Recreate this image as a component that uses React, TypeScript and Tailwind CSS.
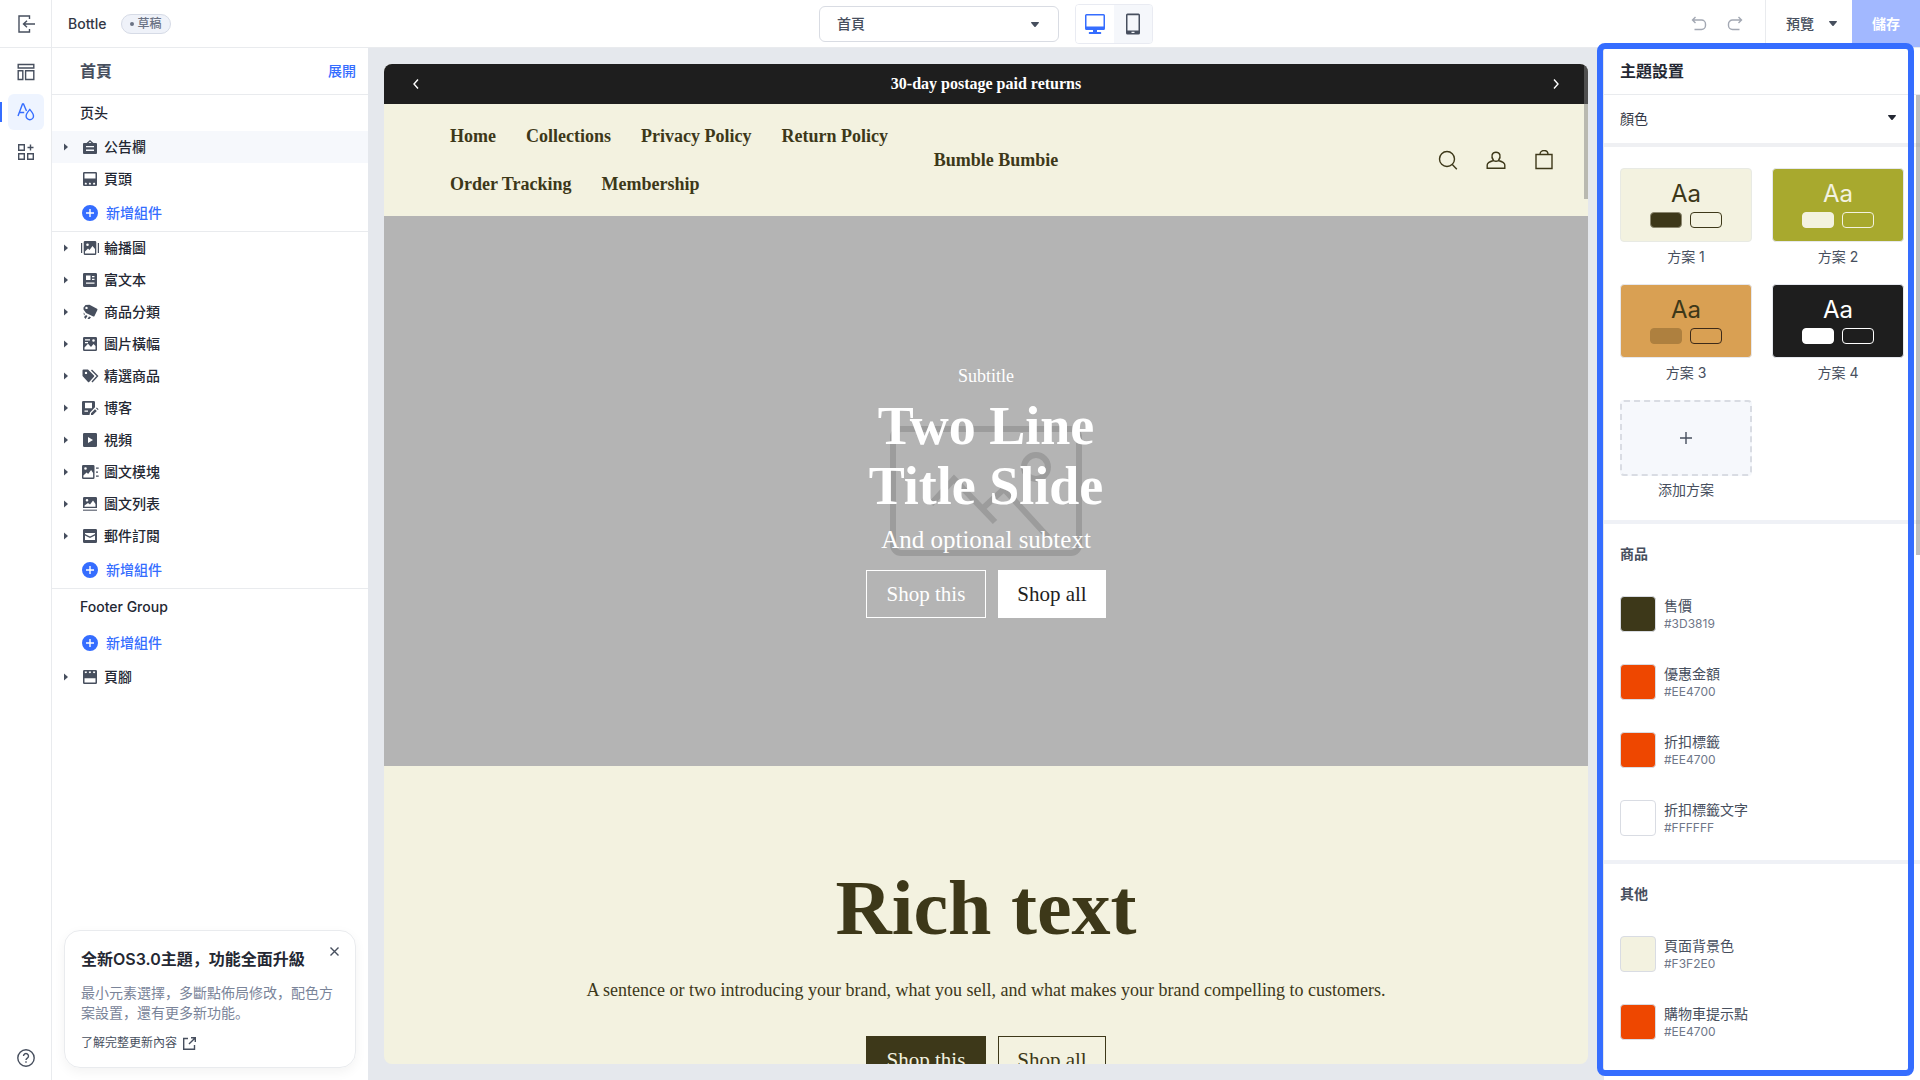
import { FC, ReactNode } from "react";

interface IIconProps {
  className?: string
  size?: number
  box?: number
  stroke?: boolean
  children: ReactNode
}

const Icon: FC<IIconProps> = ({ className = "", size = 20, box = 20, stroke = false, children }) => (
  <svg
    aria-hidden="true"
    className={`shrink-0 ${className}`}
    width={size}
    height={size}
    viewBox={`0 0 ${box} ${box}`}
    fill={stroke ? "none" : "currentColor"}
    stroke={stroke ? "currentColor" : "none"}
    strokeWidth="1.4"
  >
    {children}
  </svg>
);

// section icons, all on a 20x20 box
const sectionIcons: Record<string, ReactNode> = {
  announcement: (
    <>
      <path d="M7 6.500 10 3.800l3 2.700" fill="none" stroke="currentColor" strokeWidth="1.3" />
      <path fillRule="evenodd" d="M4 6h12a1 1 0 0 1 1 1v9a1 1 0 0 1-1 1H4a1 1 0 0 1-1-1V7a1 1 0 0 1 1-1Zm2 3v1.300h8V9H6Zm0 3.600v1.300h8v-1.300H6Z" />
    </>
  ),
  header: (
    <path fillRule="evenodd" d="M4.300 3h11.400a1.300 1.300 0 0 1 1.300 1.300v11.400a1.300 1.300 0 0 1-1.300 1.300H4.300A1.300 1.300 0 0 1 3 15.700V4.300A1.300 1.300 0 0 1 4.300 3Zm.2 1.500v5h11v-5h-11Zm.3 9.700v1.300h2v-1.300l-1-.6-1 .6Zm4.100 0v1.300h2v-1.300l-1-.6-1 .6Zm4.200 0v1.300h2v-1.300l-1-.6-1 .6Z" />
  ),
  slideshow: (
    <>
      <path d="M1 5h1.200v10H1zM17.800 5H19v10h-1.200z" />
      <path fillRule="evenodd" d="M5 3h10a1.300 1.300 0 0 1 1.300 1.300v11.400A1.300 1.300 0 0 1 15 17H5a1.300 1.300 0 0 1-1.300-1.300V4.300A1.300 1.300 0 0 1 5 3Zm2.500 2.500a1.300 1.300 0 1 0 0 2.600 1.300 1.300 0 0 0 0-2.600ZM5 15.500h10V11l-2.500-3-3 4-1.500-1.500-3 3v2Z" />
    </>
  ),
  richText: (
    <path fillRule="evenodd" d="M4.300 3h11.400A1.300 1.300 0 0 1 17 4.300v11.400a1.300 1.300 0 0 1-1.300 1.300H4.300A1.300 1.300 0 0 1 3 15.700V4.300A1.300 1.300 0 0 1 4.300 3ZM6 5.500V10h4.500V5.500H6Zm6 .5v1.200h2.500V6H12Zm0 2.800V10h2.500V8.800H12ZM6 12.500v1.300h8.500v-1.300H6Z" />
  ),
  category: (
    <>
      <path fillRule="evenodd" d="M3.500 5.500 5.500 3l4-.2 7.500 4c.5.3.6.7.4 1.200L14.500 14c-.3.500-.7.600-1.200.4L6 11 3.500 7.500v-2Zm3-.8a1.200 1.200 0 1 0 0 2.400 1.200 1.200 0 0 0 0-2.400Z" />
      <path d="M3.500 10.500 5 12l-1 1.500zM4 15l2-2 1.500 1-2 3zM7.500 17 9 14.500l2 .8L9.500 17z" />
    </>
  ),
  banner: (
    <path fillRule="evenodd" d="M4.300 3h11.400A1.300 1.300 0 0 1 17 4.300v11.400a1.300 1.300 0 0 1-1.300 1.300H4.300A1.300 1.300 0 0 1 3 15.700V4.300A1.300 1.300 0 0 1 4.300 3ZM5 5.300v1.200h5V5.300H5ZM5 8v1.200h3V8H5Zm8.500-2.800a1.300 1.300 0 1 0 0 2.600 1.300 1.300 0 0 0 0-2.600ZM4.500 15.500h11V12l-2-2-2.500 3L8 9.800 4.500 13.500v2Z" />
  ),
  featured: (
    <>
      <path fillRule="evenodd" d="M2.500 4.500a1 1 0 0 1 1-1H8l6 6c.4.400.4.800 0 1.200L9.200 16c-.4.400-.8.400-1.200 0l-5.500-6v-5.500ZM6 5.700a1.200 1.200 0 1 0 0 2.400 1.200 1.200 0 0 0 0-2.400Z" />
      <path d="m11.500 4 6 6-5.500 6" fill="none" stroke="currentColor" strokeWidth="1.4" />
    </>
  ),
  blog: (
    <>
      <path fillRule="evenodd" d="M3.300 3h10.400A1.300 1.300 0 0 1 15 4.300v5L10 14.500 9.500 17H3.300A1.300 1.300 0 0 1 2 15.700V4.300A1.300 1.300 0 0 1 3.300 3ZM5 4.700v5.600h7V4.700H5ZM4.500 12.500v1.200H8v-1.200H4.500Z" />
      <path d="m11 15.200 4-4 1.800 1.800-4 4H11zM16 10.200l.8-.8 1.800 1.800-.8.800z" />
    </>
  ),
  video: (
    <path fillRule="evenodd" d="M4.300 3h11.400A1.300 1.300 0 0 1 17 4.300v11.400a1.300 1.300 0 0 1-1.300 1.300H4.300A1.300 1.300 0 0 1 3 15.700V4.300A1.300 1.300 0 0 1 4.300 3ZM8 7v6l5-3-5-3Z" />
  ),
  imageText: (
    <>
      <path fillRule="evenodd" d="M3.300 3h9.900a1.300 1.300 0 0 1 1.300 1.300v11.400a1.300 1.300 0 0 1-1.300 1.300H3.300A1.300 1.300 0 0 1 2 15.700V4.300A1.300 1.300 0 0 1 3.300 3ZM5.500 5.200a1.300 1.300 0 1 0 0 2.600 1.300 1.300 0 0 0 0-2.600ZM3.400 15.500h9.700V11l-2-3-3 4-1.500-1.500-3.200 3v2Z" />
      <path d="M16 5.500h2.700v1.200H16zM16 9.500h2v1.200h-2zM16 13.500h2.700v1.200H16z" />
    </>
  ),
  imageList: (
    <>
      <path fillRule="evenodd" d="M4.300 3h11.400A1.300 1.300 0 0 1 17 4.300V14H3V4.300A1.300 1.300 0 0 1 4.300 3ZM7 5a1.300 1.300 0 1 0 0 2.600A1.300 1.300 0 0 0 7 5Zm-2.500 7.800h11V10l-2.500-3.500-3 4L8 9l-3.500 2.500v1.300Z" />
      <path d="M3 15.500h14V17H3z" opacity=".7" />
    </>
  ),
  email: (
    <path fillRule="evenodd" d="M4.300 3h11.400A1.300 1.300 0 0 1 17 4.300v11.400a1.300 1.300 0 0 1-1.300 1.300H4.300A1.300 1.300 0 0 1 3 15.700V4.300A1.300 1.300 0 0 1 4.300 3ZM5 7v1l5 2.600L15 8V7H5Zm0 2.600V14h10V9.600l-5 2.500-5-2.500Z" />
  ),
  footer: (
    <path fillRule="evenodd" d="M4.300 3h11.400A1.300 1.300 0 0 1 17 4.300v11.400a1.300 1.300 0 0 1-1.300 1.300H4.300A1.300 1.300 0 0 1 3 15.700V4.300A1.300 1.300 0 0 1 4.300 3Zm.2 8.200v4.300h11v-4.300h-11Zm.3-6.700v1.200l1 .6 1-.6V4.500h-2Zm4.100 0v1.200l1 .6 1-.6V4.500h-2Zm4.200 0v1.200l1 .6 1-.6V4.500h-2Z" />
  ),
};

interface ISection {
  icon: string
  name: string
  leaf?: boolean
  active?: boolean
}

const headerSections: ISection[] = [
  { icon: "announcement", name: "公告欄", active: true },
  { icon: "header", name: "頁頭", leaf: true },
];

const bodySections: ISection[] = [
  { icon: "slideshow", name: "輪播圖" },
  { icon: "richText", name: "富文本" },
  { icon: "category", name: "商品分類" },
  { icon: "banner", name: "圖片橫幅" },
  { icon: "featured", name: "精選商品" },
  { icon: "blog", name: "博客" },
  { icon: "video", name: "視頻" },
  { icon: "imageText", name: "圖文模塊" },
  { icon: "imageList", name: "圖文列表" },
  { icon: "email", name: "郵件訂閱" },
];

const schemes = [
  { name: "方案 1", card: "bg-[#f3f2e0] border-[#e8eae4] text-[#3d3819]", solid: "bg-[#3d3819] border-[#8b876f]", outline: "border-[#3d3819]" },
  { name: "方案 2", card: "bg-[#a8a92e] border-[#e6e8ee] text-[#f3f2e0]", solid: "bg-[#f3f2e0] border-[#f3f2e0]", outline: "border-[#f3f2e0]" },
  { name: "方案 3", card: "bg-[#d9a053] border-[#e6e8ee] text-[#3d3819]", solid: "bg-[#ae803f] border-[#ae803f]", outline: "border-[#3d2a19]" },
  { name: "方案 4", card: "bg-[#1e1e1e] border-[#e6e8ee] text-white", solid: "bg-white border-white", outline: "border-white" },
];

const productColors = [
  { name: "售價", hex: "#3D3819", swatch: "bg-[#3d3819]" },
  { name: "優惠金額", hex: "#EE4700", swatch: "bg-[#ee4700]" },
  { name: "折扣標籤", hex: "#EE4700", swatch: "bg-[#ee4700]" },
  { name: "折扣標籤文字", hex: "#FFFFFF", swatch: "bg-white" },
];

const otherColors = [
  { name: "頁面背景色", hex: "#F3F2E0", swatch: "bg-[#f3f2e0]" },
  { name: "購物車提示點", hex: "#EE4700", swatch: "bg-[#ee4700]" },
];

const navLinks = ["Home", "Collections", "Privacy Policy", "Return Policy", "Order Tracking", "Membership"];

const Caret = ({ className = "" }: { className?: string }) => (
  <svg aria-hidden="true" className={`shrink-0 ${className}`} width="8" height="5" viewBox="0 0 8 5" fill="currentColor">
    <path d="M.6 0h6.800c.5 0 .8.500.4.900L4.600 4.700c-.3.300-.9.300-1.200 0L.2.900C-.2.500.1 0 .6 0Z" />
  </svg>
);

const SectionRow: FC<{ item: ISection }> = ({ item }) => (
  <li>
    <button type="button" className={`flex h-8 w-full items-center pl-3 text-left ${item.active ? "bg-[#f6f8fc]" : ""}`}>
      <svg aria-hidden="true" className={`mr-3 shrink-0 ${item.leaf ? "invisible" : ""}`} width="4" height="8" viewBox="0 0 4 8" fill="currentColor">
        <path d="M0 .5v7L4 4z" />
      </svg>
      <Icon className="text-[#474f5e]">{sectionIcons[item.icon]}</Icon>
      <span className="ml-1 font-medium text-[#242833]">{item.name}</span>
    </button>
  </li>
);

const AddSection = () => (
  <button type="button" className="flex h-9 w-full items-center gap-2 pl-[30px] font-medium text-[#356dff]">
    <Icon size={16} box={16}>
      <path fillRule="evenodd" d="M8 0a8 8 0 1 1 0 16A8 8 0 0 1 8 0Zm-.7 4v3.300H4v1.400h3.300V12h1.400V8.700H12V7.300H8.700V4H7.300Z" />
    </Icon>
    新增組件
  </button>
);

const ColorRow: FC<{ item: (typeof productColors)[number] }> = ({ item }) => (
  <button type="button" className="flex items-center gap-2 text-left">
    <span className={`size-9 rounded-sm border border-[#d9dce3] ${item.swatch}`} />
    <span className="flex flex-col">
      <span className="leading-5 text-[#474f5e]">{item.name}</span>
      <span className="text-xs leading-4 text-[#6f7789]">{item.hex}</span>
    </span>
  </button>
);

const TopBar = () => (
  <header className="flex h-12 shrink-0 border-b border-[#e9ebee]">
    <button type="button" aria-label="Exit" className="flex w-[52px] items-center justify-center border-r border-[#e9ebee] text-[#474f5e]">
      <Icon stroke>
        <path d="M13.500 5V2H3v16h10.500v-3M19 10H7.500M11 6.800 7.500 10l3.500 3.200" />
      </Icon>
    </button>
    <div className="grid flex-1 grid-cols-[1fr_auto_1fr] items-center">
      <div className="flex items-center gap-3.5 pl-4">
        <h1 className="font-medium text-[#333845]">Bottle</h1>
        <span className="flex h-5 items-center gap-1 rounded-full border border-[#d6dbe6] bg-[#eff2f9] px-2 text-xs font-medium text-[#6b7385]">
          <span className="size-1 rounded-full bg-[#6b7385]" />
          草稿
        </span>
      </div>
      <div className="flex items-center gap-4">
        <div className="relative">
          <select aria-label="Page" className="h-9 w-60 appearance-none rounded-md border border-[#d9dce3] bg-white px-[17px] font-medium text-[#474f5e]">
            <option>首頁</option>
          </select>
          <Caret className="absolute top-4 right-5 text-[#474f5e]" />
        </div>
        <div className="flex h-10 overflow-hidden rounded-sm border border-[#e9ebf2]">
          <button type="button" aria-label="Desktop" className="flex w-[38px] items-center justify-center bg-white text-[#356dff]">
            <Icon size={22} box={22}>
              <path fillRule="evenodd" d="M2.500 1h17A1.500 1.500 0 0 1 21 2.500v13a1.500 1.500 0 0 1-1.500 1.500H13v2h3.500c1 0 1 2 0 2h-11c-1 0-1-2 0-2H9v-2H2.500A1.500 1.500 0 0 1 1 15.500v-13A1.500 1.500 0 0 1 2.500 1Zm0 1.500V13.500h17V2.500h-17Z" />
            </Icon>
          </button>
          <button type="button" aria-label="Mobile" className="flex w-[38px] items-center justify-center bg-[#f5f7fb] text-[#474f5e]">
            <Icon size={22} box={22}>
              <path fillRule="evenodd" d="M5.500.5h11A1.500 1.500 0 0 1 18 2v18a1.500 1.500 0 0 1-1.500 1.500h-11A1.500 1.500 0 0 1 4 20V2A1.500 1.500 0 0 1 5.500.5Zm0 1.700v15.300h11V2.200h-11Zm4 16.500v1.300h3v-1.300h-3Z" />
            </Icon>
          </button>
        </div>
      </div>
      <div className="flex h-full items-center justify-end">
        <div className="flex gap-5 pr-[22px] text-[#a3a8b3]">
          <button type="button" aria-label="Undo">
            <Icon size={16} box={16} stroke>
              <path d="M4.500 1 1.500 4l3 3M1.500 4h9a4 4 0 0 1 4 4v1.500a4 4 0 0 1-4 4H3.500" />
            </Icon>
          </button>
          <button type="button" aria-label="Redo">
            <Icon size={16} box={16} stroke>
              <path d="m11.500 1 3 3-3 3M14.500 4h-9a4 4 0 0 0-4 4v1.500a4 4 0 0 0 4 4h7" />
            </Icon>
          </button>
        </div>
        <button type="button" className="flex h-full items-center gap-[15px] border-l border-[#e9ebee] pr-[15px] pl-5 font-medium text-[#474f5e]">
          預覽
          <Caret />
        </button>
        <button type="button" className="h-full w-17 bg-[#a2b8ff] font-bold text-white">儲存</button>
      </div>
    </div>
  </header>
);

const Rail = () => (
  <nav className="flex w-[52px] shrink-0 flex-col items-center justify-between border-r border-[#e9ebee] pt-1.5 pb-1 text-[#474f5e]">
    <div className="flex flex-col gap-1">
      <button type="button" aria-label="Templates" className="flex size-9 items-center justify-center">
        <Icon stroke>
          <path d="M2.200 2.500h15.600v3.500H2.200zM2.200 8.800h4.600v8.700H2.200zM9.600 8.800h8.200v8.700H9.600z" />
        </Icon>
      </button>
      <button type="button" aria-label="Theme settings" className="relative flex size-9 items-center justify-center rounded-md bg-[#eef4ff] text-[#356dff]">
        <span className="absolute top-2 -left-2 h-5 w-0.5 bg-[#356dff]" />
        <Icon stroke>
          <path d="M2 14 6.500 2h1l3 7M3.700 10.500h4.500M13.800 7.500c2 2.400 3.700 4.300 3.700 6.500a3.700 3.700 0 0 1-7.400 0c0-2.200 1.700-4.100 3.700-6.500Z" />
        </Icon>
      </button>
      <button type="button" aria-label="Apps" className="flex size-9 items-center justify-center">
        <Icon stroke>
          <path d="M2.700 2.700h5.600v5.600H2.700zM2.700 11.700h5.600v5.600H2.700zM11.700 11.700h5.600v5.600h-5.600zM14.500 2.500v6M11.500 5.500h6" />
        </Icon>
      </button>
    </div>
    <button type="button" aria-label="Help" className="flex size-9 items-center justify-center">
      <Icon stroke>
        <path d="M10 1.800a8.200 8.200 0 1 1 0 16.400 8.200 8.200 0 0 1 0-16.400ZM7.500 8a2.500 2.500 0 1 1 3.800 2.100c-.8.500-1.300.9-1.300 1.900M10 13.200v1.500" />
      </Icon>
    </button>
  </nav>
);

const Sidebar = () => (
  <aside className="flex w-[316px] shrink-0 flex-col">
    <div className="flex h-[47px] shrink-0 items-center justify-between border-b border-[#e9ebee] pr-3 pl-7">
      <h2 className="text-base font-semibold text-[#474f5e]">首頁</h2>
      <button type="button" className="font-medium text-[#356dff]">展開</button>
    </div>
    <section className="border-b border-[#e9ebee]">
      <h3 className="flex h-9 items-center pl-7 font-medium text-[#242833]">页头</h3>
      <ul>{headerSections.map((item) => <SectionRow key={item.name} item={item} />)}</ul>
      <AddSection />
    </section>
    <section className="border-b border-[#e9ebee]">
      <ul>{bodySections.map((item) => <SectionRow key={item.name} item={item} />)}</ul>
      <AddSection />
    </section>
    <section>
      <h3 className="flex h-9 items-center pl-7 font-medium text-[#242833]">Footer Group</h3>
      <AddSection />
      <ul><SectionRow item={{ icon: "footer", name: "頁腳" }} /></ul>
    </section>
    <div className="mx-3 mt-auto mb-3 rounded-2xl border border-[#e9ebee] p-4 shadow-[0_4px_12px_rgba(0,0,0,0.05)]">
      <div className="flex items-start justify-between">
        <h3 className="text-base leading-6 font-semibold text-[#242833]">全新OS3.0主題，功能全面升級</h3>
        <button type="button" aria-label="Close" className="text-[#474f5e]">
          <Icon size={9} box={9} stroke>
            <path d="m.5.500 8 8M8.500.5l-8 8" />
          </Icon>
        </button>
      </div>
      <p className="mt-3 leading-5 text-[#7a8499]">最小元素選擇，多斷點佈局修改，配色方案設置，還有更多新功能。</p>
      <a href="#changelog" className="mt-3 flex items-center gap-1.5 text-xs leading-4 text-[#474f5e]">
        了解完整更新內容
        <Icon size={13} box={13} stroke>
          <path d="M5 1.500H.7v10.800h10.800V8M8 .7h4.300V5M12.300.7 6 7" />
        </Icon>
      </a>
    </div>
  </aside>
);

const Preview = () => (
  <main className="min-w-0 flex-1 bg-[#e5e8ed] p-4 font-['Liberation_Serif',serif]">
    <div className="relative flex h-full flex-col overflow-hidden rounded-lg bg-[#f3f2e0] text-[#3d3819]">
      <div className="flex h-10 shrink-0 items-center justify-between bg-[#1e1e1e] px-[27px] text-white">
        <button type="button" aria-label="Previous">
          <Icon size={10} box={10} stroke><path d="M7 .5 3 5l4 4.500" /></Icon>
        </button>
        <p className="text-base font-bold">30-day postage paid returns</p>
        <button type="button" aria-label="Next">
          <Icon size={10} box={10} stroke><path d="m3 .5 4 4.500-4 4.500" /></Icon>
        </button>
      </div>
      <div className="grid h-28 shrink-0 grid-cols-[1fr_auto_1fr] items-center pr-[46px] pl-[66px] text-lg font-bold">
        <nav className="flex flex-wrap gap-x-[30px] gap-y-6 leading-6">
          {navLinks.map((link) => <a key={link} href="#preview">{link}</a>)}
        </nav>
        <a href="#home">Bumble Bumbie</a>
        <div className="-mr-3 flex justify-end gap-7">
          <button type="button" aria-label="Search">
            <Icon stroke><circle cx="9" cy="9" r="7.5" /><path d="m14.300 14.500 4.500 4.700" /></Icon>
          </button>
          <button type="button" aria-label="Account">
            <Icon stroke><path d="M7.500 10.500C4.500 6 6 2.200 10 2.200s5.500 3.800 2.500 8.300c3 .9 6.300 2 6.300 4.500v3.200H1.200V15c0-2.500 3.300-3.600 6.300-4.500Zm0 0c1.500 1 3.500 1 5 0" /></Icon>
          </button>
          <button type="button" aria-label="Cart">
            <Icon stroke><path d="M2 4.500h16v14H2zM6 4.500c0-5.300 8-5.300 8 0" /></Icon>
          </button>
        </div>
      </div>
      <section className="relative flex h-[550px] shrink-0 flex-col items-center justify-center bg-[#b4b4b4] text-white">
        <svg aria-hidden="true" className="absolute inset-0 m-auto" width="192" height="130" viewBox="0 0 192 130" fill="none" stroke="#9c9c9c" strokeWidth="6">
          <rect x="3" y="3" width="186" height="124" rx="8" />
          <circle cx="146" cy="41" r="12" />
          <path d="m41 78 23-25 41 43M92 83l22-20 44 48" />
        </svg>
        <div className="relative flex flex-col items-center">
          <p className="text-lg leading-6">Subtitle</p>
          <h2 className="mt-2 text-center text-[54px] leading-[60px] font-bold">Two Line<br />Title Slide</h2>
          <p className="mt-1.5 text-[25px] leading-9">And optional subtext</p>
          <div className="mt-3 flex gap-3 text-[21px]">
            <button type="button" className="h-12 w-[120px] border border-white">Shop this</button>
            <button type="button" className="h-12 w-[108px] bg-white text-[#1e1e1e]">Shop all</button>
          </div>
        </div>
      </section>
      <section className="flex flex-col items-center pt-[102px]">
        <h2 className="text-[78px] leading-20 font-bold">Rich text</h2>
        <p className="mt-7 text-lg leading-7">A sentence or two introducing your brand, what you sell, and what makes your brand compelling to customers.</p>
        <div className="mt-8 flex gap-3 text-[21px]">
          <button type="button" className="h-12 w-[120px] bg-[#3d3819] text-[#f3f2e0]">Shop this</button>
          <button type="button" className="h-12 w-[108px] border border-[#3d3819]">Shop all</button>
        </div>
      </section>
      <div className="absolute top-0 right-0 h-[135px] w-1 bg-[#808080]/50" />
    </div>
  </main>
);

const ThemePanel = () => (
  <aside className="relative w-[316px] shrink-0">
    <div className="h-full overflow-hidden">
      <h2 className="flex h-[47px] items-center border-b border-[#e9ebee] pl-4 text-base font-semibold text-[#242833]">主題設置</h2>
      <div className="relative border-b-4 border-[#eff0f3]">
        <select aria-label="Setting group" className="h-12 w-full appearance-none px-4 text-[#333845]">
          <option>顏色</option>
        </select>
        <Caret className="absolute top-5 right-6 text-[#242833]" />
      </div>
      <div className="grid grid-cols-2 gap-x-5 gap-y-[17px] border-b-4 border-[#eff1f6] px-4 pt-[21px] pb-5 text-[#474f5e]">
        {schemes.map((scheme) => (
          <button key={scheme.name} type="button" className="flex flex-col gap-[5px]">
            <span className={`flex h-[74px] w-full flex-col items-center gap-1 rounded-sm border pt-[11px] ${scheme.card}`}>
              <span className="text-2xl leading-7">Aa</span>
              <span className="flex gap-2">
                <span className={`h-4 w-8 rounded-sm border ${scheme.solid}`} />
                <span className={`h-4 w-8 rounded-sm border ${scheme.outline}`} />
              </span>
            </span>
            <span className="w-full text-center leading-5">{scheme.name}</span>
          </button>
        ))}
        <button type="button" className="flex flex-col gap-1">
          <span className="flex h-[76px] w-full items-center justify-center rounded-sm border-2 border-dashed border-[#d9dce3] bg-[#f6f8fc]">
            <Icon size={12} box={12} stroke><path d="M6 0v12M0 6h12" /></Icon>
          </span>
          <span className="w-full text-center leading-5">添加方案</span>
        </button>
      </div>
      <section className="flex flex-col gap-8 border-b-4 border-[#eff1f6] px-4 pt-5 pb-6">
        <h3 className="leading-5 font-semibold text-[#474f5e]">商品</h3>
        {productColors.map((item) => <ColorRow key={item.name} item={item} />)}
      </section>
      <section className="flex flex-col gap-8 px-4 pt-5">
        <h3 className="leading-5 font-semibold text-[#474f5e]">其他</h3>
        {otherColors.map((item) => <ColorRow key={item.name} item={item} />)}
      </section>
    </div>
    <div className="absolute top-[47px] right-0 h-[460px] w-1 bg-[#808080]/50" />
    {/* highlight ring around the panel */}
    <div className="pointer-events-none absolute -top-[5px] right-1.5 bottom-1 -left-[7px] z-10 rounded-lg border-6 border-[#356dff]" />
  </aside>
);

const App = () => (
  <div className="flex h-screen flex-col overflow-hidden bg-white font-[Inter,'Noto_Sans_CJK_SC',sans-serif] text-sm text-[#474f5e]">
    <TopBar />
    <div className="flex min-h-0 flex-1">
      <Rail />
      <Sidebar />
      <Preview />
      <ThemePanel />
    </div>
  </div>
);

export default App;
